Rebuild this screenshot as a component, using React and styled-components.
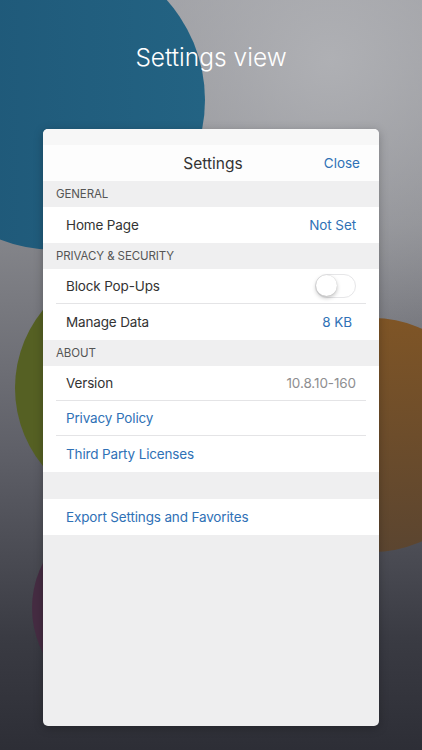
import React from 'react';
import styled, { createGlobalStyle } from 'styled-components';

const GlobalStyle = createGlobalStyle`
	html, body {
		margin: 0;
		padding: 0;
	}
	body {
		font-family: Inter, 'Noto Sans', 'Liberation Sans', sans-serif;
		-webkit-font-smoothing: antialiased;
	}
`;

const blue = '#2f71b6';

const Page = styled.div`
	position: relative;
	width: 422px;
	height: 750px;
	overflow: hidden;
	display: flex;
	flex-direction: column;
	align-items: center;
	background:
		radial-gradient(ellipse 320px 300px at 330px 60px, rgba(178, 179, 183, 0.9), rgba(178, 179, 183, 0) 100%),
		linear-gradient(180deg, #97989d 0%, #86878c 30%, #5f6068 60%, #3a3b43 85%, #2d2e36 100%);
`;

const Backdrop = styled.svg`
	position: absolute;
	inset: 0;
	width: 422px;
	height: 750px;
	z-index: 0;
`;

const Title = styled.h1`
	position: relative;
	z-index: 1;
	margin: 40px 0 0;
	font-weight: 300;
	font-size: 24.5px;
	line-height: 34px;
	color: #ffffff;
	letter-spacing: 0;
`;

const Sheet = styled.div`
	position: relative;
	z-index: 1;
	margin-top: 55px;
	width: 336px;
	height: 597px;
	border-radius: 5px;
	overflow: hidden;
	background: #eeeeef;
	box-shadow: 0 2px 10px rgba(0, 0, 0, 0.25);
	display: flex;
	flex-direction: column;
`;

const TopStrip = styled.div`
	height: 16px;
	background: #f7f7f7;
`;

const NavBar = styled.div`
	height: 36px;
	background: #fdfdfd;
	display: grid;
	grid-template-columns: 1fr auto 1fr;
	align-items: center;
	padding: 0 19px 0 23px;
`;

const NavTitle = styled.div`
	grid-column: 2;
	font-size: 15.5px;
	color: #333333;
`;

const NavButton = styled.div`
	grid-column: 3;
	justify-self: end;
	font-size: 13.5px;
	color: ${blue};
`;

const SectionHeader = styled.div`
	height: ${({ $h }) => $h || 26}px;
	flex-shrink: 0;
	display: flex;
	align-items: center;
	padding: 0 13px;
	font-size: 11.5px;
	letter-spacing: -0.1px;
	color: #555555;
	background: #efeff0;
	text-transform: uppercase;
`;

const Group = styled.div`
	background: #ffffff;
	padding: 0 13px;
`;

const Row = styled.div`
	box-sizing: border-box;
	height: ${({ $last }) => ($last ? 36 : 35)}px;
	display: flex;
	align-items: center;
	justify-content: space-between;
	padding: 0 10px;
	border-bottom: ${({ $last }) => ($last ? 'none' : '1px solid #e4e4e6')};
`;

const Label = styled.span`
	font-size: 13.5px;
	letter-spacing: -0.15px;
	color: ${({ $link }) => ($link ? blue : '#333333')};
`;

const Value = styled.span`
	font-size: 13.5px;
	letter-spacing: -0.1px;
	color: ${({ $muted }) => ($muted ? '#8e8e90' : blue)};
	padding-right: ${({ $pad }) => $pad || 0}px;
`;

const Switch = styled.div`
	position: relative;
	width: 41px;
	height: 24px;
	border-radius: 12px;
	box-sizing: border-box;
	border: 1.5px solid #e6e6e8;
	background: #ffffff;
`;

const Knob = styled.div`
	position: absolute;
	top: 0px;
	left: 0px;
	width: 21px;
	height: 21px;
	border-radius: 50%;
	background: #ffffff;
	box-shadow: 0 2px 4px rgba(0, 0, 0, 0.25), 0 0 1px rgba(0, 0, 0, 0.2);
`;

export default function App() {
	return (
		<>
			<GlobalStyle />
			<Page>
				<Backdrop viewBox='0 0 422 750'>
					<defs>
						<linearGradient id='blueFill' x1='0' y1='0' x2='1' y2='0'>
							<stop offset='0' stopColor='#1e5676' />
							<stop offset='1' stopColor='#236383' />
						</linearGradient>
						<linearGradient id='orangeFill' x1='0' y1='0' x2='0' y2='1'>
							<stop offset='0' stopColor='#7f5526' />
							<stop offset='1' stopColor='#5b4530' />
						</linearGradient>
					</defs>
					<circle cx='55' cy='100' r='150' fill='url(#blueFill)' />
					<circle cx='138' cy='388' r='123' fill='#556023' />
					<circle cx='130' cy='608' r='98' fill='#452c42' />
					<circle cx='373' cy='435' r='117' fill='url(#orangeFill)' />
				</Backdrop>
				<Title>Settings view</Title>
				<Sheet>
					<TopStrip />
					<NavBar>
						<NavTitle>Settings</NavTitle>
						<NavButton>Close</NavButton>
					</NavBar>
					<SectionHeader>General</SectionHeader>
					<Group>
						<Row $last>
							<Label>Home Page</Label>
							<Value>Not Set</Value>
						</Row>
					</Group>
					<SectionHeader>Privacy &amp; Security</SectionHeader>
					<Group>
						<Row>
							<Label>Block Pop-Ups</Label>
							<Switch>
								<Knob />
							</Switch>
						</Row>
						<Row $last>
							<Label>Manage Data</Label>
							<Value $pad={4}>8 KB</Value>
						</Row>
					</Group>
					<SectionHeader>About</SectionHeader>
					<Group>
						<Row>
							<Label>Version</Label>
							<Value $muted>10.8.10-160</Value>
						</Row>
						<Row>
							<Label $link>Privacy Policy</Label>
						</Row>
						<Row $last>
							<Label $link>Third Party Licenses</Label>
						</Row>
					</Group>
					<SectionHeader $h={27} />
					<Group>
						<Row $last>
							<Label $link>Export Settings and Favorites</Label>
						</Row>
					</Group>
				</Sheet>
			</Page>
		</>
	);
}
